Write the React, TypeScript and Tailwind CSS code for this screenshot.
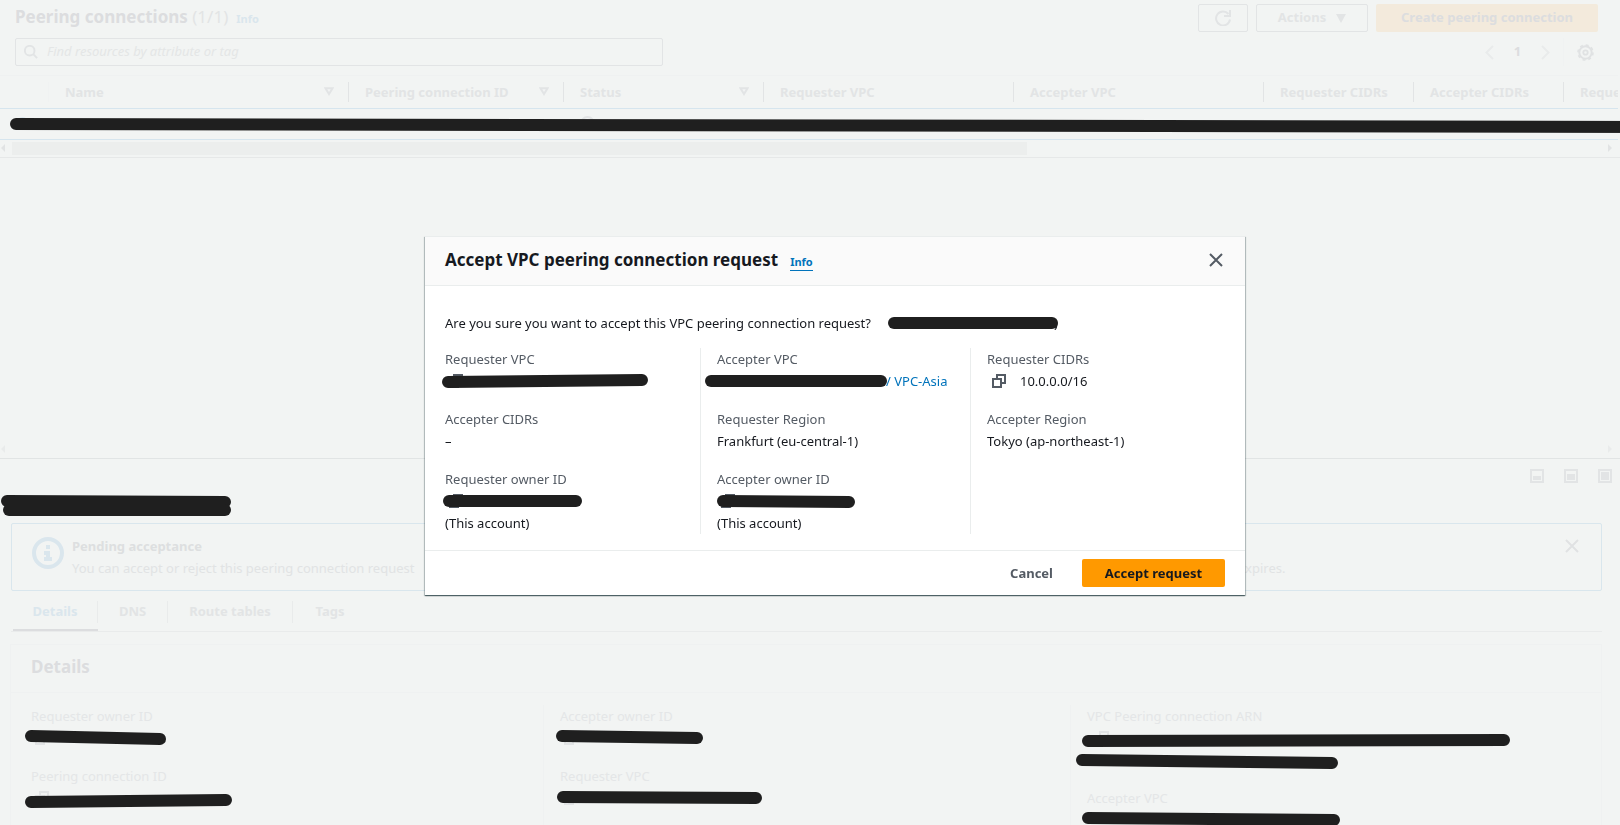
import type { ReactNode } from "react";

type StrokeProps = { w: number; rise?: number; className?: string };

/* Marker stroke laid over a hidden value; rise tilts the right end (in px). */
function Marker({ w, rise = 0, className = "" }: StrokeProps) {
  return (
    <svg
      aria-hidden="true"
      className={"absolute z-30 overflow-visible pointer-events-none " + className}
      width={w}
      height={12}
      viewBox={`0 0 ${w} 12`}
    >
      <line x1={6} y1={6} x2={w - 6} y2={6 + rise} stroke="#1f1f1f" strokeWidth={12} strokeLinecap="round" />
    </svg>
  );
}

function CopyIcon() {
  return (
    <svg width="14" height="14" viewBox="0 0 14 14" fill="none" stroke="currentColor" strokeWidth="2" aria-hidden="true">
      <path d="M1 5h8v8H1z" />
      <path d="M5 5V1h8v8H9" />
    </svg>
  );
}

/* Copy icon row whose value is covered by a marker stroke. */
function HiddenValue() {
  return (
    <div className="flex h-[22px] items-center pl-1">
      <CopyIcon />
    </div>
  );
}

function CloseIcon() {
  return (
    <svg width="14" height="14" viewBox="0 0 14 14" fill="none" stroke="currentColor" strokeWidth="2" aria-hidden="true">
      <path d="M1 1l12 12M13 1L1 13" />
    </svg>
  );
}

function SortIcon() {
  return (
    <svg width="10" height="9" viewBox="0 0 10 9" fill="none" stroke="currentColor" strokeWidth="2" aria-hidden="true">
      <path d="M1.5 1.2h7L5 7z" />
    </svg>
  );
}

function Arrow({ right = false }: { right?: boolean }) {
  return (
    <svg width="4" height="8" viewBox="0 0 4 8" fill="currentColor" aria-hidden="true">
      <path d={right ? "M0 0l4 4-4 4z" : "M4 0L0 4l4 4z"} />
    </svg>
  );
}

function PaneIcon({ top }: { top: number }) {
  return (
    <svg width="14" height="14" viewBox="0 0 14 14" aria-hidden="true">
      <path d="M1 1h12v12H1z" fill="none" stroke="currentColor" strokeWidth="2" />
      <rect x="3" y={top} width="8" height={11 - top} fill="currentColor" />
    </svg>
  );
}

const columns = [
  { name: "Name", sort: true },
  { name: "Peering connection ID", sort: true },
  { name: "Status", sort: true },
  { name: "Requester VPC" },
  { name: "Accepter VPC" },
  { name: "Requester CIDRs" },
  { name: "Accepter CIDRs" },
  { name: "Requester owner ID" },
];

function ConnectionsPane() {
  return (
    <section className="flex h-[459px] shrink-0 flex-col border-b border-[#e1e4e4]">
      <div className="flex items-start justify-between pt-1 pr-[22px] pl-[15px]">
        <div className="flex items-baseline">
          <h1 className="text-[17px] leading-[26px] font-bold text-[#dcdddf]">
            Peering connections <span className="font-normal text-[#e2e4e5]">(1/1)</span>
          </h1>
          <a href="#info" className="ml-2 text-[11px] font-bold text-[#dae6ed]">Info</a>
        </div>
        <div className="flex gap-2 text-[13px] font-bold text-[#e2e4e5]">
          <button aria-label="Refresh" className="flex h-7 w-[50px] items-center justify-center rounded-xs border border-[#e2e4e5]">
            <svg width="16" height="16" viewBox="0 0 16 16" fill="none" stroke="currentColor" strokeWidth="2" aria-hidden="true">
              <path d="M15 9.5A7 7 0 1 1 13.5 4" />
              <path d="M15 0v6H9" />
            </svg>
          </button>
          <button className="flex h-7 w-28 items-center justify-center gap-[10px] rounded-xs border border-[#e2e4e5]">
            Actions
            <svg width="10" height="9" viewBox="0 0 10 9" fill="currentColor" aria-hidden="true"><path d="M0 0h10L5 9z" /></svg>
          </button>
          <button className="h-7 w-[222px] rounded-xs bg-[#f3eadc] text-[#dcdddf]">Create peering connection</button>
        </div>
      </div>
      <div className="flex items-center justify-between pt-[6px] pr-[26px] pb-[9px] pl-[15px]">
        <label className="flex h-7 w-[648px] items-center gap-[9px] rounded-xs border border-[#e2e4e5] px-2 text-[#e2e4e5]">
          <svg width="14" height="14" viewBox="0 0 16 16" fill="none" stroke="currentColor" strokeWidth="2.200" aria-hidden="true">
            <circle cx="6.5" cy="6.5" r="5.5" />
            <path d="M10.5 10.5L15 15" />
          </svg>
          <input
            aria-label="Find resources"
            placeholder="Find resources by attribute or tag"
            className="min-w-0 flex-1 bg-transparent text-[13px] italic outline-none placeholder:text-[#e4e6e6]"
          />
        </label>
        <div className="flex items-center text-[#e9ebeb]">
          <button aria-label="Previous page">
            <svg width="9" height="15" viewBox="0 0 9 15" fill="none" stroke="currentColor" strokeWidth="2" aria-hidden="true"><path d="M8 1L1.5 7.500L8 14" /></svg>
          </button>
          <button className="w-[47px] text-center text-[13px] font-bold text-[#dcdddf]">1</button>
          <button aria-label="Next page">
            <svg width="9" height="15" viewBox="0 0 9 15" fill="none" stroke="currentColor" strokeWidth="2" aria-hidden="true"><path d="M1 1l6.500 6.500L1 14" /></svg>
          </button>
          <span className="mx-[13px] h-7 border-l border-[#f0f2f2]" />
          <button aria-label="Preferences" className="text-[#e0e2e3]">
            <svg width="17" height="17" viewBox="0 0 17 17" fill="none" stroke="currentColor" aria-hidden="true">
              <circle cx="8.5" cy="8.5" r="6.200" strokeWidth="2" />
              <circle cx="8.5" cy="8.5" r="7.500" strokeWidth="1.600" strokeDasharray="2.950 2.940" />
              <circle cx="8.5" cy="8.5" r="2.200" strokeWidth="1.800" />
            </svg>
          </button>
        </div>
      </div>

      <div className="mr-[2px] overflow-hidden border-t border-[#eff1f1]">
        <table className="w-[1714px] table-fixed border-collapse text-left text-[13px]">
          <colgroup>
            <col className="w-[49px]" />
            <col className="w-[300px]" />
            <col className="w-[215px]" />
            <col className="w-[200px]" />
            <col className="w-[250px]" />
            <col className="w-[250px]" />
            <col className="w-[150px]" />
            <col className="w-[150px]" />
            <col className="w-[150px]" />
          </colgroup>
          <thead>
            <tr className="h-8 border-b border-[#d6e5ee]">
              <th className="p-0"><div className="h-5 border-r border-[#f0f2f2]" /></th>
              {columns.map((c) => (
                <th key={c.name} className="p-0 font-bold text-[#e2e4e5]">
                  <div className="flex h-5 items-center justify-between border-r border-[#e2e4e5] pr-[14px] pl-4 leading-5 whitespace-nowrap">
                    {c.name}
                    {c.sort && <SortIcon />}
                  </div>
                </th>
              ))}
            </tr>
          </thead>
          <tbody>
            <tr className="h-[31px] border-b border-[#d6e5ee]">
              <td className="p-0 pl-4"><input type="radio" defaultChecked aria-label="Select connection" className="block size-[13px] appearance-none rounded-full border-4 border-[#dae6ed]" /></td>
              <td /><td />
              <td className="p-0 pl-4 text-[#e2e4e5]">
                <svg width="15" height="15" viewBox="0 0 15 15" fill="none" stroke="currentColor" strokeWidth="2" aria-hidden="true"><circle cx="7.500" cy="7.500" r="6.500" /></svg>
              </td>
              <td /><td /><td /><td /><td />
            </tr>
          </tbody>
        </table>
      </div>
      <div className="relative">
        <Marker w={1640} rise={3} className="-top-[22px] left-[10px]" />
      </div>
      <div className="flex h-[18px] items-center border-b border-[#e6e8e8] pr-2 pl-px text-[#e1e3e4]">
        <Arrow />
        <div className="ml-[7px] h-[13px] w-[63%] bg-[#eceeed]" />
        <span className="ml-auto"><Arrow right /></span>
      </div>
      <div className="mt-auto flex justify-between pr-2 pb-[5px] pl-px text-[#e9ebeb]">
        <Arrow />
        <Arrow right />
      </div>
    </section>
  );
}

function DetailItem({ label, children }: { label: string; children: ReactNode }) {
  return (
    <div>
      <dt className="text-[#e4e6e7]">{label}</dt>
      <dd className="relative min-h-[22px] text-[#e2e4e5]">{children}</dd>
    </div>
  );
}

function DetailsPane() {
  return (
    <section className="min-h-0 flex-1">
      <div className="relative flex h-16 items-start justify-end gap-5 pt-[10px] pr-2 text-[#e2e4e5]">
        <Marker w={230} rise={1} className="top-[36px] left-px" />
        <Marker w={228} className="top-[45px] left-[3px]" />
        <button aria-label="Small panel"><PaneIcon top={7} /></button>
        <button aria-label="Medium panel"><PaneIcon top={5} /></button>
        <button aria-label="Full panel"><PaneIcon top={3} /></button>
      </div>
      <div className="mr-[18px] ml-[11px]">
        <div className="flex h-[68px] rounded-xs border border-[#d9e6ed] pt-[13px] pr-[22px] pl-5">
          <svg className="shrink-0 text-[#dae6ed]" width="32" height="32" viewBox="0 0 32 32" aria-hidden="true">
            <circle cx="16" cy="16" r="14" fill="none" stroke="currentColor" strokeWidth="4" />
            <path d="M14 8h4v4h-4zM12 14h6v6h2v4h-8v-4h2v-2h-2z" fill="currentColor" />
          </svg>
          <div className="ml-2 flex-1 text-[13px] leading-[22px] text-[#e1e3e4]">
            <h2 className="-mt-[2px] font-bold text-[#dddfe0]">Pending acceptance</h2>
            <p className="flex">
              <span className="w-[1166px] whitespace-nowrap">You can accept or reject this peering connection request</span>
              <span>expires.</span>
            </p>
          </div>
          <button aria-label="Dismiss" className="mt-[2px] h-[14px] text-[#e0e2e3]"><CloseIcon /></button>
        </div>
        <div role="tablist" className="flex h-[41px] items-stretch border-b border-[#e9ebeb] text-[13px] font-bold text-[#e2e4e5]">
          <button role="tab" aria-selected="true" className="ml-[2px] border-b-2 border-[#dcdddf] pt-[3px] text-[#dae6ed]">
            <span className="flex h-[22px] w-[85px] items-center justify-center border-r border-[#e9ebeb]">Details</span>
          </button>
          <button role="tab" aria-selected="false" className="border-b-2 border-transparent pt-[3px]"><span className="flex h-[22px] w-[70px] items-center justify-center border-r border-[#e9ebeb]">DNS</span></button>
          <button role="tab" aria-selected="false" className="border-b-2 border-transparent pt-[3px]"><span className="flex h-[22px] w-[125px] items-center justify-center border-r border-[#e9ebeb]">Route tables</span></button>
          <button role="tab" aria-selected="false" className="border-b-2 border-transparent pt-[3px]"><span className="flex h-[22px] w-[74px] items-center justify-center">Tags</span></button>
        </div>
        <div className="-ml-px mt-3 border border-[#eff1f1]">
          <h2 className="h-[48px] border-b border-[#eff1f1] pl-5 text-[17px] leading-[44px] font-bold text-[#dcdddf]">Details</h2>
          <div className="grid grid-cols-[533px_527px_1fr] pt-3 text-[13px] leading-[22px]">
            <dl className="flex h-40 flex-col gap-4 border-r border-[#eff1f1] pl-5">
              <DetailItem label="Requester owner ID">
                <HiddenValue />
                <Marker w={141} rise={3} className="top-[3px] -left-[6px]" />
              </DetailItem>
              <DetailItem label="Peering connection ID">
                <HiddenValue />
                <Marker w={207} rise={-2} className="top-[9px] -left-[6px]" />
              </DetailItem>
            </dl>
            <dl className="flex h-40 flex-col gap-4 border-r border-[#eff1f1] pl-4">
              <DetailItem label="Accepter owner ID">
                <HiddenValue />
                <Marker w={147} rise={2} className="top-[3px] -left-[4px]" />
              </DetailItem>
              <DetailItem label="Requester VPC">
                <HiddenValue />
                <Marker w={205} rise={1} className="top-[4px] -left-[3px]" />
              </DetailItem>
            </dl>
            <dl className="flex h-40 flex-col gap-4 pl-4">
              <DetailItem label="VPC Peering connection ARN">
                <div className="h-11 pl-1">
                  <HiddenValue />
                  <Marker w={428} rise={-1} className="top-[8px] -left-[5px]" />
                  <Marker w={262} rise={3} className="top-[27px] -left-[11px]" />
                </div>
              </DetailItem>
              <DetailItem label="Accepter VPC">
                <Marker w={258} rise={2} className="top-[3px] -left-[5px]" />
              </DetailItem>
            </dl>
          </div>
        </div>
      </div>
    </section>
  );
}

function Field({ label, children }: { label: string; children: ReactNode }) {
  return (
    <div>
      <dt className="text-[#545b64]">{label}</dt>
      <dd className="relative min-h-[22px] whitespace-nowrap">{children}</dd>
    </div>
  );
}

function AcceptDialog() {
  return (
    <div className="fixed inset-0 z-20 flex items-center justify-center pt-[6px] pl-[50px]">
      <div
        role="dialog"
        aria-modal="true"
        aria-labelledby="dialog-title"
        className="w-[820px] border-t border-[#eaeded] bg-white text-[13px] leading-[22px] text-[#16191f] shadow-[0_1px_1px_0_rgba(0,28,36,0.5),1px_1px_1px_0_rgba(0,28,36,0.2),-1px_1px_1px_0_rgba(0,28,36,0.2)]"
      >
        <header className="flex h-[49px] items-center border-b border-[#eaeded] bg-[#fafafa] pr-[22px] pb-[2px] pl-5">
          <h2 id="dialog-title" className="text-[17px] font-bold">Accept VPC peering connection request</h2>
          <a href="#info" className="mt-1 ml-3 border-b border-[#0073bb] text-[11px] leading-4 font-bold text-[#0073bb]">Info</a>
          <button aria-label="Close" className="ml-auto text-[#545b64]"><CloseIcon /></button>
        </header>
        <div className="px-5 pt-[26px] pb-4">
          <p className="flex">
            Are you sure you want to accept this VPC peering connection request?
            <span className="relative ml-[17px] w-[170px] text-right">
              )
              <Marker w={170} className="top-[5px] left-0" />
            </span>
          </p>
          <div className="mt-[14px] grid grid-cols-[256px_270px_1fr]">
            <dl className="flex flex-col gap-4 border-r border-[#eaeded]">
              <Field label="Requester VPC">
                <span className="text-[#545b64]"><HiddenValue /></span>
                <Marker w={206} rise={-2} className="top-[6px] -left-[3px]" />
              </Field>
              <Field label="Accepter CIDRs">–</Field>
              <Field label="Requester owner ID">
                <span className="text-[#545b64]"><HiddenValue /></span>
                <Marker w={139} className="top-[5px] -left-[2px]" />
                (This account)
              </Field>
            </dl>
            <dl className="flex flex-col gap-4 border-r border-[#eaeded] pl-4">
              <Field label="Accepter VPC">
                <a href="#vpc" className="block pl-[169px] text-[#0073bb]">/ VPC-Asia</a>
                <Marker w={182} className="top-[5px] -left-[12px]" />
              </Field>
              <Field label="Requester Region">Frankfurt (eu-central-1)</Field>
              <Field label="Accepter owner ID">
                <span className="text-[#545b64]"><HiddenValue /></span>
                <Marker w={138} rise={1} className="top-[5px] left-0" />
                (This account)
              </Field>
            </dl>
            <dl className="flex flex-col gap-4 pl-4">
              <Field label="Requester CIDRs">
                <span className="flex items-center gap-[14px] pl-[5px]">
                  <button aria-label="Copy CIDR" className="text-[#545b64]"><CopyIcon /></button>
                  10.0.0.0/16
                </span>
              </Field>
              <Field label="Accepter Region">Tokyo (ap-northeast-1)</Field>
            </dl>
          </div>
        </div>
        <footer className="flex h-[45px] items-center justify-end border-t border-[#eaeded] pr-5 text-[13px] font-bold">
          <button className="mr-2 h-7 px-[21px] text-[#545b64]">Cancel</button>
          <button className="h-7 w-[143px] rounded-xs bg-[#ff9900] text-[#16191f]">Accept request</button>
        </footer>
      </div>
    </div>
  );
}

export default function App() {
  return (
    <main className="flex h-screen flex-col overflow-hidden bg-[#f2f4f3] font-['Noto_Sans','Open_Sans',sans-serif]">
      <ConnectionsPane />
      <DetailsPane />
      <AcceptDialog />
    </main>
  );
}
